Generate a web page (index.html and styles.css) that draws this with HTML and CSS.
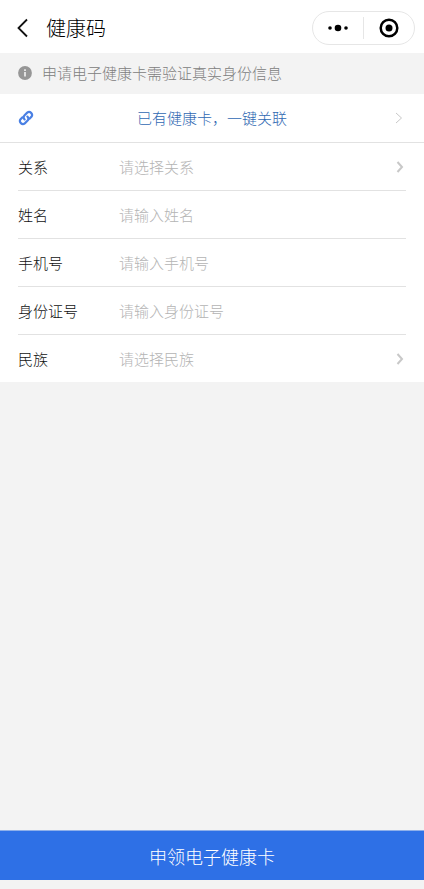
FILE: index.html
```html
<!DOCTYPE html>
<html lang="zh-CN">
<head>
<meta charset="utf-8">
<meta name="viewport" content="width=device-width, initial-scale=1">
<title>健康码</title>
<link rel="stylesheet" href="styles.css">
</head>
<body>
<header class="navbar">
  <button class="back" type="button" aria-label="返回">
    <svg width="12" height="20" viewBox="0 0 12 20"><path d="M10 1.500 1.500 10l8.500 8.500" fill="none" stroke="#111" stroke-width="1.800"/></svg>
  </button>
  <h1 class="title">健康码</h1>
  <div class="capsule">
    <button class="capsule-button" type="button" aria-label="更多">
      <svg width="22" height="20" viewBox="0 0 22 20"><circle cx="3" cy="10" r="1.800"/><circle cx="11" cy="10" r="3.300"/><circle cx="19" cy="10" r="1.800"/></svg>
    </button>
    <button class="capsule-button" type="button" aria-label="关闭">
      <svg width="20" height="20" viewBox="0 0 20 20"><circle cx="10" cy="10" r="8.300" fill="none" stroke="#000" stroke-width="2.500"/><circle cx="10" cy="10" r="3.500"/></svg>
    </button>
  </div>
</header>
<main class="content">
  <p class="notice">
    <svg width="14" height="14" viewBox="0 0 14 14" aria-hidden="true"><circle cx="7" cy="7" r="6.900" fill="#969696"/><path d="M7 6v4.500M7 3.300v1.600" stroke="#f3f3f3" stroke-width="1.600"/></svg>
    <span>申请电子健康卡需验证真实身份信息</span>
  </p>
  <a class="link-row" href="#link">
    <svg class="link-icon" width="16" height="16" viewBox="0 0 16 16" aria-hidden="true"><g fill="none" stroke="#4a80e4" stroke-width="2.200" stroke-linecap="round"><path d="M6.600 9.400a3 3 0 0 1 0-4.200l2.600-2.600a3 3 0 0 1 4.200 4.200l-1.900 1.900"/><path d="M9.400 6.600a3 3 0 0 1 0 4.200l-2.600 2.600a3 3 0 0 1-4.200-4.200l1.900-1.900"/></g></svg>
    <span class="link-text">已有健康卡，一键关联</span>
    <svg class="arrow" width="8" height="12" viewBox="0 0 8 12" aria-hidden="true"><path d="M1 1l5.500 5L1 11"/></svg>
  </a>
  <form class="form" id="apply">
    <div class="field">
      <label for="relation">关系</label>
      <select id="relation"><option>请选择关系</option></select>
      <svg class="arrow arrow-bold" width="8" height="12" viewBox="0 0 8 12" aria-hidden="true"><path d="M1.500 1l4.500 5-4.500 5"/></svg>
    </div>
    <div class="field">
      <label for="name">姓名</label>
      <input id="name" type="text" placeholder="请输入姓名">
    </div>
    <div class="field">
      <label for="phone">手机号</label>
      <input id="phone" type="tel" placeholder="请输入手机号">
    </div>
    <div class="field">
      <label for="idcard">身份证号</label>
      <input id="idcard" type="text" placeholder="请输入身份证号">
    </div>
    <div class="field">
      <label for="nation">民族</label>
      <select id="nation"><option>请选择民族</option></select>
      <svg class="arrow arrow-bold" width="8" height="12" viewBox="0 0 8 12" aria-hidden="true"><path d="M1.500 1l4.500 5-4.500 5"/></svg>
    </div>
  </form>
</main>
<button class="submit" type="submit" form="apply">申领电子健康卡</button>
</body>
</html>
```
FILE: styles.css
```css
* {
  box-sizing: border-box;
}

body {
  display: flex;
  flex-direction: column;
  min-height: 100vh;
  margin: 0;
  padding-bottom: 9px;
  background: #f3f3f3;
  color: #111;
  font-family: "Noto Sans CJK SC", sans-serif;
  font-size: 15px;
  font-weight: 200;
  line-height: 24px;
}

button,
input,
select {
  margin: 0;
  padding: 0;
  border: 0;
  background: none;
  color: inherit;
  font: inherit;
}

svg {
  display: block;
  flex: none;
}

.navbar {
  display: flex;
  align-items: center;
  height: 53px;
  padding: 2px 9px 0 17px;
  background: #fff;
}

.back {
  width: 29px;
}

.title {
  flex: 1;
  margin: 0;
  color: #000;
  font-size: 20px;
  font-weight: 200;
}

.capsule {
  display: flex;
  align-items: center;
  width: 103px;
  height: 34px;
  border: 1px solid #e6e6e6;
  border-radius: 17px;
}

.capsule-button {
  display: flex;
  flex: 1;
  align-items: center;
  justify-content: center;
  height: 22px;
}

.capsule-button + .capsule-button {
  border-left: 1px solid #e6e6e6;
}

.content {
  flex: 1;
}

.notice {
  display: flex;
  align-items: center;
  gap: 10px;
  height: 41px;
  margin: 0;
  padding: 0 18px 2px;
  color: #808080;
}

.link-row {
  display: flex;
  align-items: center;
  height: 49px;
  padding: 0 21px 0 18px;
  border-bottom: 1px solid #e2e2e2;
  background: #fff;
  color: #2f68b2;
  text-decoration: none;
}

.link-text {
  flex: 1;
  padding-right: 5px;
  text-align: center;
}

.arrow {
  fill: none;
  stroke: #c8c8c8;
  stroke-width: 1;
}

.arrow-bold {
  stroke-width: 2;
}

.form {
  padding: 0 18px;
  background: #fff;
}

.field {
  display: flex;
  align-items: center;
  height: 48px;
  padding-right: 2px;
  border-bottom: 1px solid #e2e2e2;
}

.field:last-child {
  height: 47px;
  border-bottom: 0;
}

.field label {
  width: 101px;
}

.field input,
.field select {
  flex: 1;
  min-width: 0;
  height: 24px;
  outline: 0;
  appearance: none;
}

.field select,
.field input::placeholder {
  color: #b4b4b4;
  opacity: 1;
}

.submit {
  height: 50px;
  border-top: 1px solid #8fb0ea;
  background: #2e70e6;
  color: #fff;
  font-size: 18px;
}
```
